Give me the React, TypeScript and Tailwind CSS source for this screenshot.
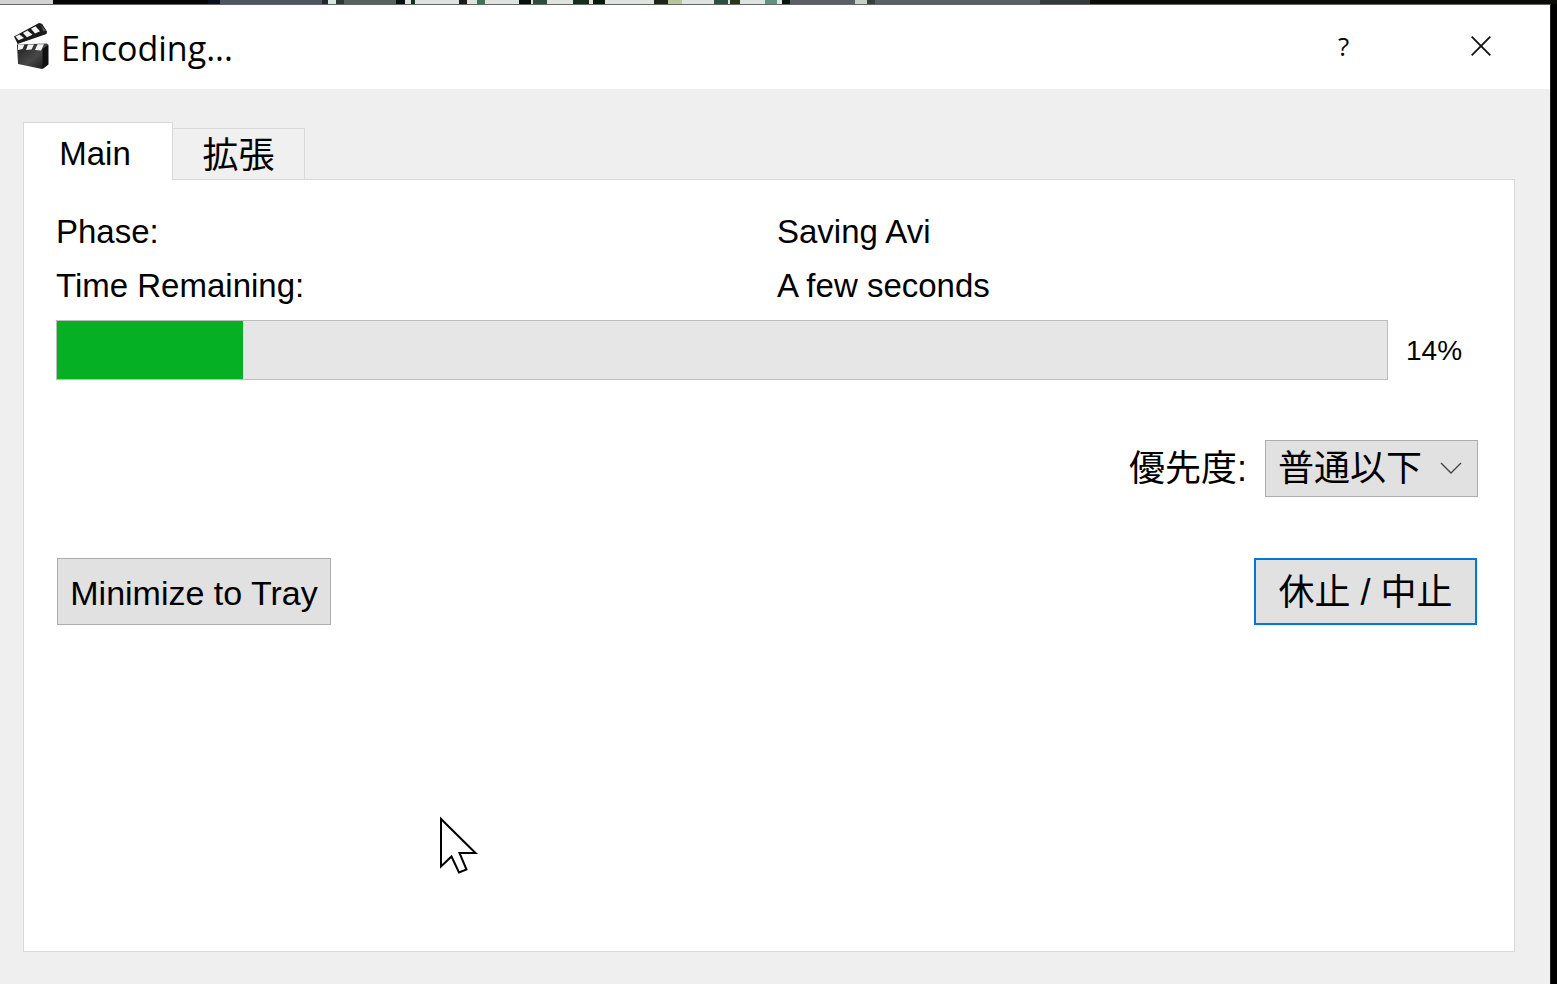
import { useState } from "react";

const tabs = ["Main", "拡張"] as const;

const priorities = ["高", "普通以上", "普通", "普通以下", "低"];

// slivers of the desktop above the window: [x, width, colour]
const desktop: [number, number, string][] = [
  [0, 53, "#d2d2d2"],
  [53, 167, "#050504"],
  [208, 14, "#0a1020"],
  [220, 102, "#4c5860"],
  [322, 6, "#20282a"],
  [328, 8, "#d4e6e0"],
  [336, 8, "#2c3832"],
  [344, 52, "#56645f"],
  [396, 9, "#06120f"],
  [405, 385, "#dfe3df"],
  [411, 4, "#12301c"],
  [459, 8, "#1c1c1c"],
  [477, 8, "#3c7458"],
  [519, 12, "#06100c"],
  [533, 14, "#2c4c3c"],
  [573, 16, "#14301c"],
  [593, 12, "#08180c"],
  [654, 14, "#202418"],
  [668, 14, "#b8c49c"],
  [714, 14, "#2c5040"],
  [730, 10, "#283820"],
  [765, 12, "#5c9480"],
  [782, 8, "#08140e"],
  [790, 65, "#5c6066"],
  [855, 12, "#c4d0c8"],
  [867, 8, "#38403e"],
  [875, 165, "#586264"],
  [1040, 50, "#343a3a"],
  [1090, 467, "#0b0b08"],
];

function DesktopStrip() {
  return (
    <svg
      className="block h-1 w-full shrink-0"
      viewBox="0 0 1557 4"
      preserveAspectRatio="none"
      aria-hidden="true"
    >
      {desktop.map(([x, width, fill]) => (
        <rect key={x} x={x} y="0" width={width} height="4" fill={fill} />
      ))}
    </svg>
  );
}

function ClapperIcon() {
  return (
    <svg className="h-12 w-9 shrink-0" viewBox="0 0 36 48" aria-hidden="true">
      <defs>
        <linearGradient id="slate" x1="0" y1="0" x2="1" y2="1">
          <stop offset="0" stopColor="#1c1c1c" />
          <stop offset="0.55" stopColor="#484848" />
          <stop offset="1" stopColor="#141414" />
        </linearGradient>
      </defs>
      <path d="M1 13.500 26 0l3 .8 5 7.700-.5 2.500L4.500 21 3.500 18.500z" fill="#1a1a1a" />
      <path d="M2.500 13.600 6.500 11.500 11 15 5.500 17.300z" fill="#f4f4f4" />
      <path d="M10 9.900 14.500 7.500 19.500 11.700 14 14.200z" fill="#f4f4f4" />
      <path d="M18 5.700 22.500 3.300 27 8.300 22 10.600z" fill="#f4f4f4" />
      <path d="M27.500 1.500 33 7.700 30.500 8.500z" fill="#5a5a5a" />
      <path d="M4 21.500 34 20.500l1.300 1.200V41.500L29 46 5 41z" fill="url(#slate)" />
      <path d="M29.500 26 35.300 22V41.500L29.500 46z" fill="#101010" />
      <path d="M5 21.500H11.500L9.500 26 5 27z" fill="#f4f4f4" />
      <path d="M15 21.500H21L18.500 26.500 13 27z" fill="#f4f4f4" />
      <path d="M24.500 21.300H31L28 27.500 22 27z" fill="#f4f4f4" />
    </svg>
  );
}

function Cursor() {
  return (
    <svg
      className="pointer-events-none absolute top-[816px] left-[439px] h-[59px] w-10"
      viewBox="0 0 40 59"
      aria-hidden="true"
    >
      <path
        d="M2 3V50.500L12.500 40.500 20 56.500 27.500 53.500 20.500 37H36.500z"
        fill="#fff"
        stroke="#000"
        strokeWidth="2"
      />
    </svg>
  );
}

export default function App() {
  const [active, setActive] = useState<(typeof tabs)[number]>("Main");
  const [priority, setPriority] = useState("普通以下");
  const progress = 14;

  return (
    <div className="relative flex min-h-screen flex-col bg-black font-['Liberation_Sans','Noto_Sans_CJK_JP',sans-serif] text-[33px] leading-10 text-black">
      <DesktopStrip />
      <div className="mr-1.5 flex flex-1 flex-col border-t border-r border-t-[#666] border-r-[#222] bg-[#efefef]">
        <header className="flex h-[84px] items-center bg-white pl-[13px]">
          <ClapperIcon />
          <h1 className="ml-3 flex-1 pt-0.5 font-['Open_Sans',sans-serif] text-[34px]">
            Encoding...
          </h1>
          <button
            type="button"
            aria-label="Help"
            className="h-full w-[137px] pb-0.5 font-['Open_Sans',sans-serif] text-[26px]"
          >
            ?
          </button>
          <button
            type="button"
            aria-label="Close"
            className="flex h-full w-[138px] items-center justify-center pb-0.5"
          >
            <svg className="size-5" viewBox="0 0 20 20" aria-hidden="true">
              <path d="M.7.7 19.300 19.300M19.300.7.7 19.300" stroke="#111" strokeWidth="1.800" />
            </svg>
          </button>
        </header>

        <main className="flex flex-1 flex-col pt-[33px] pr-[35px] pb-8 pl-[23px]">
          <div role="tablist" className="z-10 -mb-px flex items-end">
            {tabs.map((tab) => (
              <button
                key={tab}
                type="button"
                role="tab"
                aria-selected={active === tab}
                onClick={() => setActive(tab)}
                className={
                  active === tab
                    ? "h-[58px] w-[150px] border border-b-0 border-[#d9d9d9] bg-white pt-1 pr-1.5"
                    : "h-[52px] w-[132px] border border-l-0 border-[#d9d9d9] bg-[#f0f0f0] pt-1 text-4xl"
                }
              >
                {tab}
              </button>
            ))}
          </div>

          <section
            role="tabpanel"
            className="flex-1 border border-[#d9d9d9] bg-white pt-[25px] pr-9 pl-8"
          >
            <dl className="grid grid-cols-2 gap-x-5 leading-[54px]">
              <dt>Phase:</dt>
              <dd>Saving Avi</dd>
              <dt>Time Remaining:</dt>
              <dd>A few seconds</dd>
            </dl>

            <div className="mt-[7px] flex items-center">
              <div
                role="progressbar"
                aria-label="Encoding progress"
                aria-valuenow={progress}
                aria-valuemin={0}
                aria-valuemax={100}
                className="h-[60px] flex-1 border border-[#bcbcbc] bg-[#e6e6e6]"
              >
                <div className="h-full bg-[#06b025]" style={{ width: `${progress}%` }} />
              </div>
              <span className="w-[90px] pt-0.5 pl-[18px] text-[28px]">{progress}%</span>
            </div>

            <div className="mt-[60px] flex items-center justify-end gap-[18px]">
              <label htmlFor="priority" className="text-4xl">
                優先度:
              </label>
              <div className="relative">
                <select
                  id="priority"
                  value={priority}
                  onChange={(e) => setPriority(e.target.value)}
                  className="block h-[57px] w-[213px] appearance-none border border-[#adadad] bg-[#e1e1e1] pl-3 text-4xl"
                >
                  {priorities.map((p) => (
                    <option key={p}>{p}</option>
                  ))}
                </select>
                <svg
                  className="pointer-events-none absolute top-[22px] right-4 h-3 w-[22px]"
                  viewBox="0 0 22 12"
                  fill="none"
                  aria-hidden="true"
                >
                  <path d="M1 1 11 11 21 1" stroke="#444" strokeWidth="1.400" />
                </svg>
              </div>
            </div>

            <div className="mt-[61px] flex justify-between px-px">
              <button
                type="button"
                className="h-[67px] w-[274px] border border-[#adadad] bg-[#e1e1e1] pt-0.5 text-[34px]"
              >
                Minimize to Tray
              </button>
              <button
                type="button"
                className="h-[67px] w-[223px] border-2 border-[#0078d7] bg-[#e1e1e1] pt-0.5 text-4xl"
              >
                休止 / 中止
              </button>
            </div>
          </section>
        </main>
      </div>
      <Cursor />
    </div>
  );
}
